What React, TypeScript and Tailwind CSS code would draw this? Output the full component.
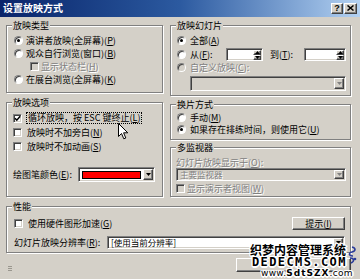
import React from "react";

const sunken =
  "border border-t-[#808080] border-l-[#808080] border-b-white border-r-white shadow-[inset_1px_1px_0_#404040,inset_-1px_-1px_0_#d4d0c8]";
const raised =
  "border border-t-white border-l-white border-b-[#404040] border-r-[#404040] shadow-[inset_-1px_-1px_0_#808080] bg-[#d4d0c8]";
const dim = "text-[#808080] [text-shadow:1px_1px_0_#fff]";

function Radio({ checked, disabled }: { checked?: boolean; disabled?: boolean }) {
  return (
    <span
      className={`flex h-[9px] w-[9px] shrink-0 items-center justify-center rounded-full border border-t-[#808080] border-l-[#808080] border-b-white border-r-white shadow-[inset_1px_1px_0_#404040] ${
        disabled ? "bg-[#d4d0c8]" : "bg-white"
      }`}
    >
      {checked && <span className="h-[3px] w-[3px] rounded-full bg-black" />}
    </span>
  );
}

function Check({ checked, disabled }: { checked?: boolean; disabled?: boolean }) {
  return (
    <span
      className={`flex h-[9px] w-[9px] shrink-0 items-center justify-center ${sunken} ${
        disabled ? "bg-[#d4d0c8]" : "bg-white"
      }`}
    >
      {checked && (
        <svg width="7" height="7" viewBox="0 0 7 7">
          <path d="M1 3.2 L2.8 5.2 L6.2 1.2" stroke="#000" strokeWidth="1.5" fill="none" />
        </svg>
      )}
    </span>
  );
}

function ArrowBtn({ disabled }: { disabled?: boolean }) {
  return (
    <span className={`flex w-[10px] shrink-0 items-center justify-center ${raised}`}>
      <svg width="5" height="3" viewBox="0 0 5 3">
        <path d="M0 0H5L2.5 3Z" fill={disabled ? "#808080" : "#000"} />
      </svg>
    </span>
  );
}

function Combo({
  className = "",
  disabled,
  children,
}: {
  className?: string;
  disabled?: boolean;
  children?: React.ReactNode;
}) {
  return (
    <div className={`flex p-[1px] ${sunken} ${disabled ? "bg-[#d4d0c8]" : "bg-white"} ${className}`}>
      <div className="flex min-w-0 flex-1 items-center whitespace-nowrap pl-[2px] text-[8.5px] leading-[9px]">{children}</div>
      <ArrowBtn disabled={disabled} />
    </div>
  );
}

function Spin({ className = "" }: { className?: string }) {
  return (
    <div className={`flex h-[13px] bg-white p-[1px] ${sunken} ${className}`}>
      <div className="flex-1" />
      <div className="flex w-[8px] flex-col">
        <span className={`flex flex-1 items-center justify-center ${raised}`}>
          <svg width="5" height="3" viewBox="0 0 5 3">
            <path d="M0 3H5L2.5 0Z" fill="#000" />
          </svg>
        </span>
        <span className={`flex flex-1 items-center justify-center ${raised}`}>
          <svg width="5" height="3" viewBox="0 0 5 3">
            <path d="M0 0H5L2.5 3Z" fill="#000" />
          </svg>
        </span>
      </div>
    </div>
  );
}

function Group({
  title,
  className = "",
  children,
}: {
  title: string;
  className?: string;
  children: React.ReactNode;
}) {
  return (
    <fieldset className={`min-w-0 border border-[#808080] shadow-[1px_1px_0_#fff,inset_1px_1px_0_#fff] ${className}`}>
      <legend className="ml-[5px] bg-[#d4d0c8] px-[1px] leading-[11px]">{title}</legend>
      {children}
    </fieldset>
  );
}

export default function App() {
  return (
    <div className="relative h-[279px] w-[360px] overflow-hidden bg-[#d4d0c8] font-['Noto_Sans_CJK_SC',sans-serif] text-[9px] leading-[11px] text-black">
      {/* title bar */}
      <div className="flex h-[17px] items-center bg-linear-to-r from-[#0a246a] via-[#2c5aa0] to-[#b4d2f2] px-[3px] pb-[1px]">
        <span className="flex-1 text-[10px] font-bold leading-[12px] text-white">设置放映方式</span>
        <span className={`flex h-[11px] w-[12px] items-center justify-center font-['Liberation_Sans',sans-serif] text-[9px] font-bold leading-none ${raised}`}>
          ?
        </span>
        <span className={`ml-[1px] flex h-[11px] w-[13px] items-center justify-center ${raised}`}>
          <svg width="7" height="6" viewBox="0 0 7 6">
            <path d="M0.5 0.5 L6.5 5.5 M6.5 0.5 L0.5 5.5" stroke="#000" strokeWidth="1.5" />
          </svg>
        </span>
      </div>

      <div className="flex flex-col pl-[6px] pr-[9px] pt-[3px]">
        <div className="flex gap-[7px]">
          {/* left column */}
          <div className="flex w-[157px] flex-col gap-[4px]">
            <Group title="放映类型">
              <div className="flex flex-col pb-[6px] pl-[7px] pt-[3px]">
                <label className="flex h-[13px] items-center gap-[3px]">
                  <Radio checked />
                  <span>演讲者放映(全屏幕)(<u>P</u>)</span>
                </label>
                <label className="flex h-[13px] items-center gap-[3px]">
                  <Radio />
                  <span>观众自行浏览(窗口)(<u>B</u>)</span>
                </label>
                <label className="ml-[16px] flex h-[13px] items-center gap-[2px]">
                  <Check disabled />
                  <span className={dim}>显示状态栏(<u>H</u>)</span>
                </label>
                <label className="flex h-[13px] items-center gap-[3px]">
                  <Radio />
                  <span>在展台浏览(全屏幕)(<u>K</u>)</span>
                </label>
              </div>
            </Group>

            <Group title="放映选项">
              <div className="flex flex-col pb-[14px] pl-[6px] pt-[3px]">
                <label className="flex h-[14px] items-center gap-[4px]">
                  <Check checked />
                  <span className="border border-dotted border-black px-[1px] leading-[10px]">
                    循环放映，按 ESC 键终止(<u>L</u>)
                  </span>
                </label>
                <label className="flex h-[14px] items-center gap-[5px]">
                  <Check />
                  <span>放映时不加旁白(<u>N</u>)</span>
                </label>
                <label className="flex h-[14px] items-center gap-[5px]">
                  <Check />
                  <span>放映时不加动画(<u>S</u>)</span>
                </label>
                <div className="mt-[14px] flex h-[15px] items-center">
                  <span className="w-[65px] shrink-0">绘图笔颜色(<u>E</u>):</span>
                  <div className={`flex h-[15px] w-[77px] bg-white p-[1px] ${sunken}`}>
                    <div className="flex flex-1 items-center px-[2px]">
                      <div className="h-[8px] w-full border border-black bg-[#ff0000]" />
                    </div>
                    <ArrowBtn />
                  </div>
                </div>
              </div>
            </Group>
          </div>

          {/* right column */}
          <div className="flex w-[181px] flex-col">
            <Group title="放映幻灯片">
              <div className="flex flex-col pb-[4px] pl-[6px] pr-[4px] pt-[3px]">
                <label className="flex h-[13px] items-center gap-[4px]">
                  <Radio checked />
                  <span>全部(<u>A</u>)</span>
                </label>
                <div className="flex h-[14px] items-center">
                  <Radio />
                  <span className="ml-[4px] w-[32px] shrink-0">从(<u>F</u>):</span>
                  <Spin className="ml-[4px] w-[37px]" />
                  <span className="ml-[7px] w-[34px] shrink-0">到(<u>T</u>):</span>
                  <Spin className="w-[42px]" />
                </div>
                <label className="flex h-[13px] items-center gap-[4px]">
                  <Radio disabled />
                  <span className={dim}>自定义放映(<u>C</u>):</span>
                </label>
                <Combo disabled className="ml-[13px] mt-[2px] h-[15px]" />
              </div>
            </Group>

            <Group title="换片方式" className="mt-[3px]">
              <div className="flex flex-col pb-[4px] pl-[6px] pt-[1px]">
                <label className="flex h-[12px] items-center gap-[4px]">
                  <Radio />
                  <span>手动(<u>M</u>)</span>
                </label>
                <label className="flex h-[12px] items-center gap-[4px]">
                  <Radio checked />
                  <span>如果存在排练时间，则使用它(<u>U</u>)</span>
                </label>
              </div>
            </Group>

            <Group title="多监视器" className="mt-[2px]">
              <div className="flex flex-col pb-[2px] pl-[5px] pr-[4px] pt-[4px]">
                <span className={`h-[11px] ${dim}`}>幻灯片放映显示于(<u>O</u>):</span>
                <Combo disabled className="h-[13px]">
                  <span className={dim}>主要监视器</span>
                </Combo>
                <label className="mt-[1px] flex h-[12px] items-center gap-[2px]">
                  <Check disabled />
                  <span className={dim}>显示演示者视图(<u>W</u>)</span>
                </label>
              </div>
            </Group>
          </div>
        </div>

        <Group title="性能" className="mt-[4px]">
          <div className="flex flex-col pb-[3px] pl-[7px] pr-[5px] pt-[4px]">
            <div className="flex h-[14px] items-center">
              <Check />
              <span className="ml-[5px]">使用硬件图形加速(<u>G</u>)</span>
              <button className={`ml-auto flex h-[13px] w-[53px] items-center justify-center leading-none ${raised}`}>
                提示(<u>I</u>)
              </button>
            </div>
            <div className="mt-[6px] flex h-[13px] items-center">
              <span className="w-[93px] shrink-0">幻灯片放映分辨率(<u>R</u>):</span>
              <Combo className="h-[13px] flex-1">
                <span>[使用当前分辨率]</span>
              </Combo>
            </div>
          </div>
        </Group>

        <div className="mt-[5px] flex h-[14px] items-end gap-[6px]">
          <div className="mb-[1px] ml-[2px] flex flex-col gap-[1px]">
            <span className="h-[1px] w-[4px] bg-[#9a978f]" />
            <span className="h-[1px] w-[4px] bg-[#9a978f]" />
            <span className="h-[1px] w-[4px] bg-[#9a978f]" />
          </div>
          <div className="flex-1" />
          <button className={`h-[14px] w-[55px] ${raised} shadow-[inset_-1px_-1px_0_#808080,0_0_0_1px_#000]`} />
          <button className={`h-[14px] w-[54px] ${raised}`} />
        </div>
      </div>

      {/* mouse pointer */}
      <svg className="absolute left-[118px] top-[123px]" width="11" height="17" viewBox="0 0 11 17">
        <path
          d="M0.5 0.5 L0.5 13.5 L3.5 10.5 L5.8 15.8 L7.8 15 L5.6 9.8 L9.8 9.8 Z"
          fill="#fff"
          stroke="#000"
          strokeWidth="1"
        />
      </svg>

      {/* watermark */}
      <div className="absolute left-[250px] top-[243px] flex flex-col items-start text-black [text-shadow:1px_0_0_#fff,-1px_0_0_#fff,0_1px_0_#fff,0_-1px_0_#fff,1px_1px_0_#fff,-1px_-1px_0_#fff,1px_-1px_0_#fff,-1px_1px_0_#fff,2px_0_0_#fff,0_2px_0_#fff]">
        <span className="text-[12px] font-bold leading-[13px]">织梦内容管理系统</span>
        <span className="ml-[2px] font-['DejaVu_Sans_Mono',monospace] text-[12px] font-bold leading-[12px] tracking-[1.4px]">
          DEDECMS.COM
        </span>
        <span className="ml-[11px] whitespace-nowrap font-['DejaVu_Sans',sans-serif] text-[9px] leading-[11px] tracking-[0.3px]">
          www.<span className="font-bold tracking-[1px]">SdtSZX</span>.com
        </span>
      </div>
      <svg className="absolute left-[347px] top-[246px]" width="11" height="18" viewBox="0 0 11 18">
        <path d="M5 1 C9 2 9 5 5 6 C1 7 2 10 6 10 M3 12 C7 12 8 15 4 17" stroke="#2a3c9a" strokeWidth="1.6" fill="none" />
        <circle cx="8" cy="13" r="1.3" fill="#2a3c9a" />
      </svg>
    </div>
  );
}
